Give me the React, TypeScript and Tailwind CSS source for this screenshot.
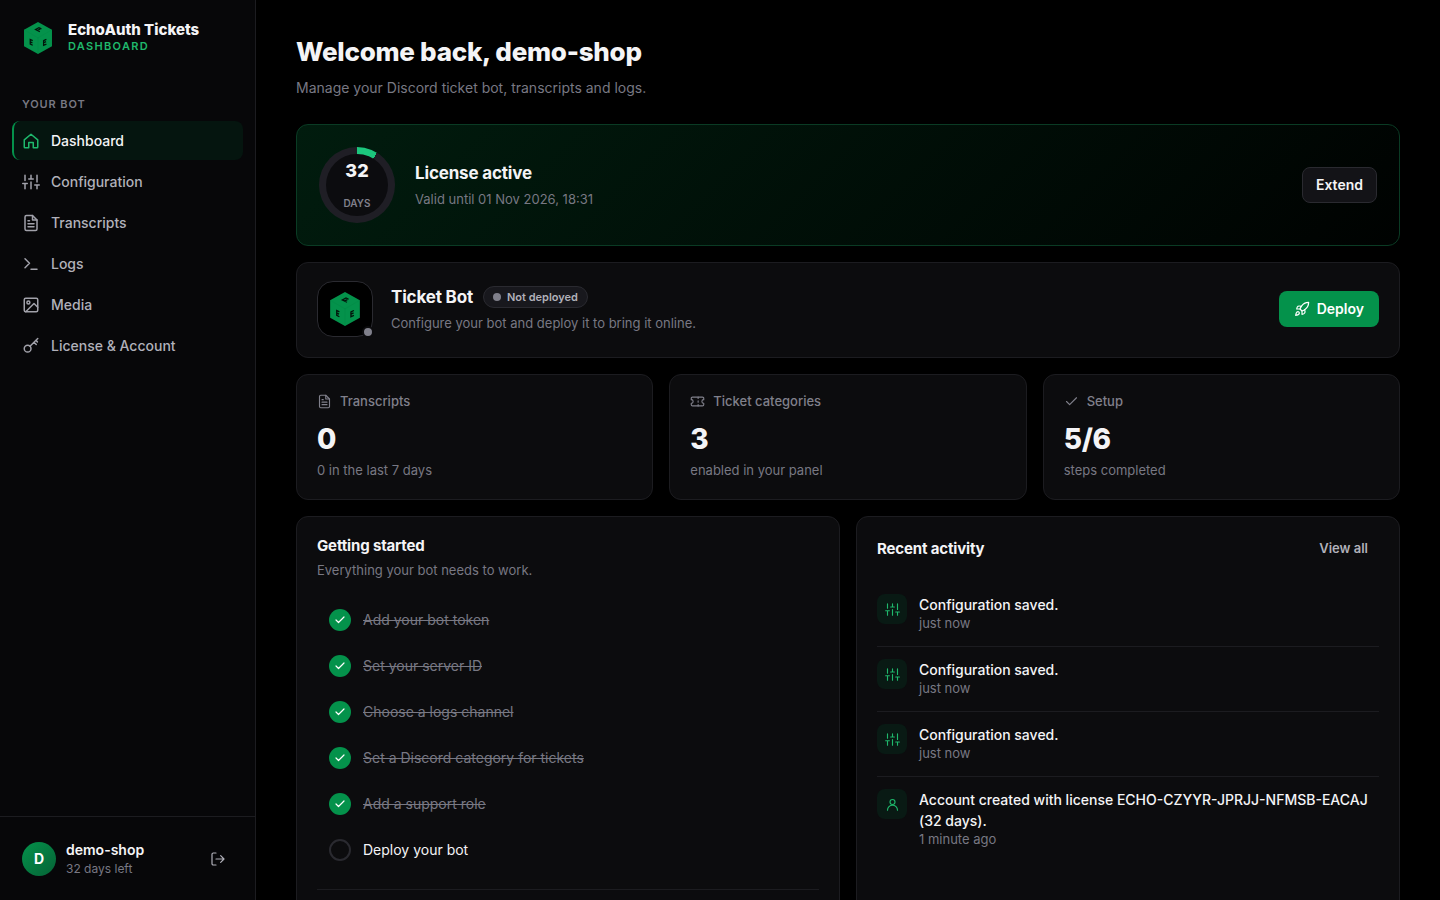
import type { ReactNode } from 'react';
import clsx from 'clsx';

type IconName =
  | 'home'
  | 'sliders'
  | 'file'
  | 'terminal'
  | 'image'
  | 'key'
  | 'logout'
  | 'rocket'
  | 'ticket'
  | 'check'
  | 'user';

const ICONS: Record<IconName, ReactNode> = {
  home: <path d="M3 10.5 12 3l9 7.5V20a1 1 0 0 1-1 1h-5v-7H9v7H4a1 1 0 0 1-1-1z" />,
  sliders: (
    <path d="M4 21v-7M4 10V3M12 21v-9M12 8V3M20 21v-5M20 12V3M1 14h6M9 8h6M17 16h6" />
  ),
  file: (
    <>
      <path d="M14 2H6a2 2 0 0 0-2 2v16a2 2 0 0 0 2 2h12a2 2 0 0 0 2-2V8z" />
      <path d="M14 2v6h6M8 13h8M8 17h8M8 9h2" />
    </>
  ),
  terminal: <path d="m4 17 6-6-6-6M12 19h8" />,
  image: (
    <>
      <rect x="3" y="3" width="18" height="18" rx="2" />
      <circle cx="8.5" cy="8.5" r="2" />
      <path d="m21 15-5-5L5 21" />
    </>
  ),
  key: (
    <>
      <circle cx="7.5" cy="15.5" r="4.5" />
      <path d="M10.7 12.3 21 2M16 7l3 3M18.5 4.5l2 2" />
    </>
  ),
  logout: <path d="M9 21H5a2 2 0 0 1-2-2V5a2 2 0 0 1 2-2h4M16 17l5-5-5-5M21 12H9" />,
  rocket: (
    <>
      <path d="M4.5 16.5c-1.5 1.26-2 5-2 5s3.74-.5 5-2c.71-.84.7-2.13-.09-2.91a2.18 2.18 0 0 0-2.91-.09z" />
      <path d="m12 15-3-3a22 22 0 0 1 2-3.95A12.88 12.88 0 0 1 22 2c0 2.72-.78 7.5-6 11a22.35 22.35 0 0 1-4 2z" />
      <path d="M9 12H4s.55-3.03 2-4c1.62-1.08 5 0 5 0M12 15v5s3.03-.55 4-2c1.08-1.62 0-5 0-5" />
    </>
  ),
  ticket: (
    <>
      <path d="M2 9a3 3 0 0 1 0 6v2a2 2 0 0 0 2 2h16a2 2 0 0 0 2-2v-2a3 3 0 0 1 0-6V7a2 2 0 0 0-2-2H4a2 2 0 0 0-2 2z" />
      <path d="M13 5v2M13 17v2M13 11v2" />
    </>
  ),
  check: <path d="M20 6 9 17l-5-5" />,
  user: (
    <>
      <circle cx="12" cy="8" r="4" />
      <path d="M4 21a8 8 0 0 1 16 0" />
    </>
  ),
};

function Icon({ name, className, stroke = 1.8 }: { name: IconName; className?: string; stroke?: number }) {
  return (
    <svg
      viewBox="0 0 24 24"
      fill="none"
      stroke="currentColor"
      strokeWidth={stroke}
      strokeLinecap="round"
      strokeLinejoin="round"
      aria-hidden="true"
      className={clsx('shrink-0', className)}
    >
      {ICONS[name]}
    </svg>
  );
}

function CubeLogo({ className }: { className?: string }) {
  return (
    <svg viewBox="0 0 90 103" aria-hidden="true" className={clsx('shrink-0', className)}>
      <path d="M45 0 90 25v53L45 103 0 78V25z" fill="#04924b" />
      <path d="M0 25l45 26 45-26M45 51v52" fill="none" stroke="#038544" strokeWidth="1" />
      <g fill="none" stroke="#03140b" strokeWidth="4">
        <path d="M51 31 37 24l11-6 8 4M44 27l8-4" />
        <path d="M28 60l-8-4v15l8 4M20 64l7 3" />
        <path d="M63 60l9-4M63 59v16l9-4M63 67l8-4" />
      </g>
    </svg>
  );
}

const NAV: { label: string; icon: IconName }[] = [
  { label: 'Dashboard', icon: 'home' },
  { label: 'Configuration', icon: 'sliders' },
  { label: 'Transcripts', icon: 'file' },
  { label: 'Logs', icon: 'terminal' },
  { label: 'Media', icon: 'image' },
  { label: 'License & Account', icon: 'key' },
];

const STATS: { label: string; icon: IconName; value: string; hint: string }[] = [
  { label: 'Transcripts', icon: 'file', value: '0', hint: '0 in the last 7 days' },
  { label: 'Ticket categories', icon: 'ticket', value: '3', hint: 'enabled in your panel' },
  { label: 'Setup', icon: 'check', value: '5/6', hint: 'steps completed' },
];

const STEPS = [
  { label: 'Add your bot token', done: true },
  { label: 'Set your server ID', done: true },
  { label: 'Choose a logs channel', done: true },
  { label: 'Set a Discord category for tickets', done: true },
  { label: 'Add a support role', done: true },
  { label: 'Deploy your bot', done: false },
];

const ACTIVITY: { text: string; time: string; icon: IconName }[] = [
  { text: 'Configuration saved.', time: 'just now', icon: 'sliders' },
  { text: 'Configuration saved.', time: 'just now', icon: 'sliders' },
  { text: 'Configuration saved.', time: 'just now', icon: 'sliders' },
  {
    text: 'Account created with license ECHO-CZYYR-JPRJJ-NFMSB-EACAJ (32 days).',
    time: '1 minute ago',
    icon: 'user',
  },
];

function Sidebar() {
  return (
    <aside className="flex w-64 shrink-0 flex-col border-r border-[#1c1c20] bg-[#070709]">
      <div className="flex items-start gap-4 px-6 pt-5">
        <CubeLogo className="mt-0.5 h-8 w-7" />
        <div>
          <div className="text-[15px] leading-5 font-extrabold text-[#f4f4f6]">EchoAuth Tickets</div>
          <div className="text-[11px] leading-3 font-semibold tracking-[0.12em] text-[#1fb86c]">DASHBOARD</div>
        </div>
      </div>
      <div className="mt-[42px] px-[22px] text-[11px] leading-4 font-semibold tracking-[0.08em] text-[#787883]">
        YOUR BOT
      </div>
      <nav className="mt-[9px] flex flex-col gap-0.5 px-3">
        {NAV.map((item, i) => (
          <a
            key={item.label}
            href="#"
            aria-current={i === 0 ? 'page' : undefined}
            className={clsx(
              'flex h-[39px] items-center gap-[11px] rounded-lg border-l-2 px-2 text-sm font-medium',
              i === 0 ? 'border-[#04924b] bg-[#05150f] text-[#f4f4f6]' : 'border-transparent text-[#b1b1ba]',
            )}
          >
            <Icon
              name={item.icon}
              stroke={2}
              className={clsx('size-[18px]', i === 0 ? 'text-[#1fb86c]' : 'text-[#a1a1aa]')}
            />
            {item.label}
          </a>
        ))}
      </nav>
      <div className="mt-auto flex items-center gap-2.5 border-t border-[#1c1c20] px-[22px] pt-[23px] pb-[22px]">
        <div className="grid size-[34px] place-items-center rounded-full bg-linear-135 from-[#04924b] to-[#056336] text-sm font-bold text-white">
          D
        </div>
        <div className="flex-1">
          <div className="text-sm leading-5 font-semibold text-[#f4f4f6]">demo-shop</div>
          <div className="text-xs leading-[18px] text-[#787883]">32 days left</div>
        </div>
        <button type="button" aria-label="Log out" className="mr-[7px] text-[#b1b1ba]">
          <Icon name="logout" className="size-4" />
        </button>
      </div>
    </aside>
  );
}

function LicenseCard() {
  const daysLeft = 32;
  const angle = (daysLeft / 365) * 360;

  return (
    <section className="flex items-center gap-5 rounded-xl border border-[#0a3b24] bg-[linear-gradient(135deg,#011c0e,#000201)] p-[22px]">
      <div
        className="size-[76px] rounded-full p-[7px]"
        style={{ background: `conic-gradient(#1cc67d ${angle}deg, #1f1e25 0)` }}
      >
        <div className="flex size-full flex-col items-center gap-3.5 rounded-full bg-[#0c0c0f] pt-[7px]">
          <span className="text-lg leading-5 font-extrabold text-[#f4f4f6]">{daysLeft}</span>
          <span className="text-[10px] leading-4 font-semibold text-[#80808b]">DAYS</span>
        </div>
      </div>
      <div className="flex-1">
        <h2 className="text-[17px] leading-6 font-bold tracking-[-0.01em] text-[#f4f4f6]">License active</h2>
        <p className="mt-1 text-[13px] leading-5 text-[#787883]">Valid until 01 Nov 2026, 18:31</p>
      </div>
      <button
        type="button"
        className="h-9 rounded-lg border border-[#2a2a30] bg-[#131317] px-[13px] text-sm font-semibold text-[#f4f4f6]"
      >
        Extend
      </button>
    </section>
  );
}

function BotCard() {
  return (
    <section className="flex items-center gap-[18px] rounded-xl border border-[#1c1c20] bg-[#0c0c0e] px-5 pt-[18px] pb-5">
      <div className="relative grid size-14 place-items-center rounded-2xl border border-[#2a2a30] bg-black">
        <CubeLogo className="h-[34px] w-[30px]" />
        <span className="absolute -right-0.5 -bottom-0.5 size-3 rounded-full border-2 border-[#0c0c0e] bg-[#80808b]" />
      </div>
      <div className="flex-1">
        <div className="flex items-center gap-2.5">
          <h2 className="text-[17px] leading-6 font-bold tracking-[-0.01em] text-[#f4f4f6]">Ticket Bot</h2>
          <span className="flex h-[22px] items-center gap-1.5 rounded-full border border-[#2a2a30] bg-[#18181d] px-[9px] text-[11px] font-semibold text-[#b1b1ba]">
            <span className="size-2 rounded-full bg-[#80808b]" />
            Not deployed
          </span>
        </div>
        <p className="mt-1 text-[13px] leading-5 text-[#787883]">
          Configure your bot and deploy it to bring it online.
        </p>
      </div>
      <button
        type="button"
        className="flex h-9 items-center gap-[7px] rounded-lg bg-[#04924b] px-[15px] text-sm font-semibold text-white"
      >
        <Icon name="rocket" className="size-4" />
        Deploy
      </button>
    </section>
  );
}

function GettingStarted() {
  return (
    <section className="rounded-xl border border-[#1c1c20] bg-[#0c0c0e] px-5 pt-[17px] pb-10">
      <h2 className="text-[15px] leading-6 font-bold tracking-[-0.01em] text-[#f4f4f6]">Getting started</h2>
      <p className="mt-0.5 text-[13px] leading-5 text-[#787883]">Everything your bot needs to work.</p>
      <ul className="mt-[17px] border-b border-[#1c1c20] pb-4">
        {STEPS.map((step) => (
          <li key={step.label} className="flex h-[46px] items-center gap-3 px-3 text-sm">
            {step.done ? (
              <span className="grid size-[22px] place-items-center rounded-full bg-[#04924b] text-white">
                <Icon name="check" stroke={2.4} className="size-3" />
              </span>
            ) : (
              <span className="size-[22px] rounded-full border-2 border-[#2a2a30]" />
            )}
            <span className={step.done ? 'text-[#787883] line-through' : 'text-[#f4f4f6]'}>{step.label}</span>
          </li>
        ))}
      </ul>
    </section>
  );
}

function RecentActivity() {
  return (
    <section className="rounded-xl border border-[#1c1c20] bg-[#0c0c0e] px-5 pt-4 pb-5">
      <div className="flex h-8 items-center justify-between">
        <h2 className="text-[15px] font-bold tracking-[-0.01em] text-[#f4f4f6]">Recent activity</h2>
        <button type="button" className="px-[11px] text-[13px] font-semibold text-[#b1b1ba]">
          View all
        </button>
      </div>
      <ul className="mt-[17px] divide-y divide-[#1c1c20]">
        {ACTIVITY.map((entry, i) => (
          <li key={i} className="flex gap-3 pt-3 pb-[15px]">
            <span className="grid size-[30px] shrink-0 place-items-center rounded-lg bg-[#091a14] text-[#1fb86c]">
              <Icon name={entry.icon} className="size-[15px]" />
            </span>
            <div>
              <p className="text-sm leading-[21px] font-medium text-[#f4f4f6]">{entry.text}</p>
              <p className="text-[13px] leading-4 text-[#787883]">{entry.time}</p>
            </div>
          </li>
        ))}
      </ul>
    </section>
  );
}

export default function App() {
  return (
    <div className="flex h-screen bg-black font-['Inter',sans-serif]">
      <Sidebar />
      <main className="min-w-0 flex-1 overflow-y-auto px-10 pt-8 pb-10 [scrollbar-width:none]">
        <h1 className="text-[26px] leading-10 font-extrabold tracking-[-0.01em] text-[#f4f4f6]">
          Welcome back, demo-shop
        </h1>
        <p className="mt-1 text-sm leading-6 text-[#787883]">Manage your Discord ticket bot, transcripts and logs.</p>

        <div className="mt-6 flex flex-col gap-4">
          <LicenseCard />
          <BotCard />

          <div className="grid grid-cols-3 gap-4">
            {STATS.map((stat) => (
              <section key={stat.label} className="rounded-xl border border-[#1c1c20] bg-[#0c0c0e] px-5 pt-4 pb-[19px]">
                <div className="flex items-center gap-2 text-[13px] leading-5 font-medium text-[#80808b]">
                  <Icon name={stat.icon} className="size-[15px]" />
                  {stat.label}
                </div>
                <div className="mt-3 text-[28px] leading-8 font-extrabold tracking-[-0.01em] text-[#f4f4f6]">
                  {stat.value}
                </div>
                <div className="mt-[5px] text-[13px] leading-5 text-[#787883]">{stat.hint}</div>
              </section>
            ))}
          </div>

          <div className="grid grid-cols-2 gap-4">
            <GettingStarted />
            <RecentActivity />
          </div>
        </div>
      </main>
    </div>
  );
}
